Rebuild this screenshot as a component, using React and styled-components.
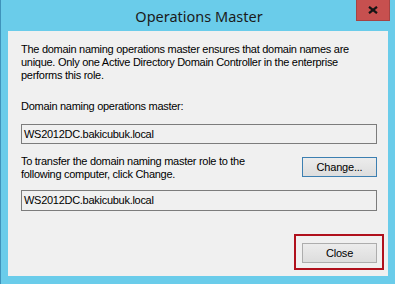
import React from "react";
import styled, { createGlobalStyle } from "styled-components";

const Global = createGlobalStyle`
  html, body { margin: 0; padding: 0; background: #6accea; }
  #root { width: 395px; height: 284px; }
`;

const Window = styled.div`
  position: relative;
  box-sizing: border-box;
  width: 395px;
  height: 284px;
  background: #6accea;
  border-left: 1px solid #3f93bb;
  display: flex;
  flex-direction: column;
  overflow: hidden;
`;

const TitleBar = styled.div`
  position: relative;
  height: 31px;
  flex: none;
  display: flex;
  align-items: center;
  justify-content: center;
`;

const Title = styled.div`
  font-family: "Noto Sans", sans-serif;
  font-size: 14.5px;
  color: #1b1b1b;
  margin-top: 1px;
  margin-left: 2px;
`;

const CloseX = styled.button`
  position: absolute;
  top: 0;
  right: 5px;
  width: 34px;
  height: 21px;
  padding: 0;
  border: 1px solid #a54343;
  border-top: none;
  background: #c7504f;
  display: flex;
  align-items: center;
  justify-content: center;
`;

const Client = styled.div`
  flex: 1;
  margin: 0 7px 8px 7px;
  background: #f0f0f0;
  padding: 12px 11px 0 13px;
  display: flex;
  flex-direction: column;
  font-family: "Liberation Sans", Arial, sans-serif;
  font-size: 11px;
  letter-spacing: -0.28px;
  line-height: 13px;
  color: #000;
`;

const Text = styled.div`
  margin-top: ${(p) => p.$mt || 0}px;
`;

const Field = styled.div`
  box-sizing: border-box;
  height: ${(p) => p.$h || 20}px;
  margin-top: ${(p) => p.$mt || 0}px;
  border: 1px solid #7c7c7c;
  background: #f0f0f0;
  padding: 0 2px;
  display: flex;
  align-items: center;
`;

const Row = styled.div`
  display: flex;
  justify-content: space-between;
  align-items: flex-start;
  margin-top: ${(p) => p.$mt || 0}px;
`;

const Button = styled.button`
  box-sizing: border-box;
  width: 75px;
  height: 20px;
  margin-top: ${(p) => p.$mt || 0}px;
  padding: 0;
  font-family: "Liberation Sans", Arial, sans-serif;
  font-size: 11px;
  letter-spacing: -0.2px;
  color: #000;
  background: linear-gradient(#ececec, #dddddd);
  border: 1px solid ${(p) => (p.$default ? "#3c7fb1" : "#adadad")};
  flex: none;
  display: block;
`;

const Footer = styled.div`
  display: flex;
  justify-content: flex-end;
  margin-top: 32px;
`;

const Marked = styled.div`
  position: relative;
`;

const Highlight = styled.div`
  position: absolute;
  left: -8px;
  top: -9px;
  right: -7px;
  bottom: -7px;
  border: 2px solid #b0101c;
  pointer-events: none;
`;

export default function App() {
  return (
    <>
      <Global />
      <Window>
        <TitleBar>
          <Title>Operations Master</Title>
          <CloseX aria-label="Close">
            <svg width="10" height="8" viewBox="0 0 10 8">
              <path d="M1 0.8 L9 7.2 M9 0.8 L1 7.2" stroke="#151515" strokeWidth="2.2" />
            </svg>
          </CloseX>
        </TitleBar>
        <Client>
          <Text>
            The domain naming operations master ensures that domain names are
            <br />
            unique. Only one Active Directory Domain Controller in the enterprise
            <br />
            performs this role.
          </Text>
          <Text $mt={18}>Domain naming operations master:</Text>
          <Field $mt={11}>WS2012DC.bakicubuk.local</Field>
          <Row $mt={11}>
            <Text>
              To transfer the domain naming master role to the
              <br />
              following computer, click Change.
            </Text>
            <Button $default $mt={2}>Change...</Button>
          </Row>
          <Field $mt={9} $h={21}>WS2012DC.bakicubuk.local</Field>
          <Footer>
            <Marked>
              <Button>Close</Button>
              <Highlight />
            </Marked>
          </Footer>
        </Client>
      </Window>
    </>
  );
}
